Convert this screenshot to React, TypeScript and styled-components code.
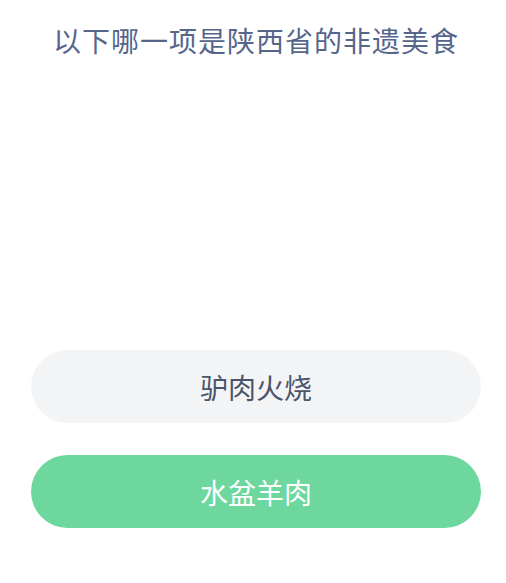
import React from 'react'
import styled, { createGlobalStyle } from 'styled-components'

const GlobalStyle = createGlobalStyle`
  html, body {
    margin: 0;
    padding: 0;
    background: #fff;
  }
  body {
    font-family: 'Noto Sans CJK SC', 'Noto Sans', sans-serif;
  }
`

const Page = styled.div`
  width: 506px;
  height: 583px;
  box-sizing: border-box;
  padding: 22px 25px 0 31px;
  display: flex;
  flex-direction: column;
`
const Question = styled.div`
  height: 36px;
  line-height: 36px;
  font-size: 28px;
  letter-spacing: 1px;
  color: #56668b;
  text-align: center;
`
const Options = styled.div`
  margin-top: 292px;
  display: flex;
  flex-direction: column;
  gap: 32px;
`
const Option = styled.div<{ $correct?: boolean }>`
  height: 73px;
  border-radius: 37px;
  background: ${(p) => (p.$correct ? '#6dd79e' : '#f3f4f6')};
  color: ${(p) => (p.$correct ? '#ffffff' : '#4b5569')};
  font-size: 28px;
  display: flex;
  align-items: center;
  justify-content: center;
`

const options = [
  { id: 'a', label: '驴肉火烧', correct: false },
  { id: 'b', label: '水盆羊肉', correct: true },
]

function App() {
  return (
    <Page>
      <GlobalStyle />
      <Question>以下哪一项是陕西省的非遗美食</Question>
      <Options>
        {options.map((o) => (
          <Option key={o.id} $correct={o.correct}>
            {o.label}
          </Option>
        ))}
      </Options>
    </Page>
  )
}

export default App
